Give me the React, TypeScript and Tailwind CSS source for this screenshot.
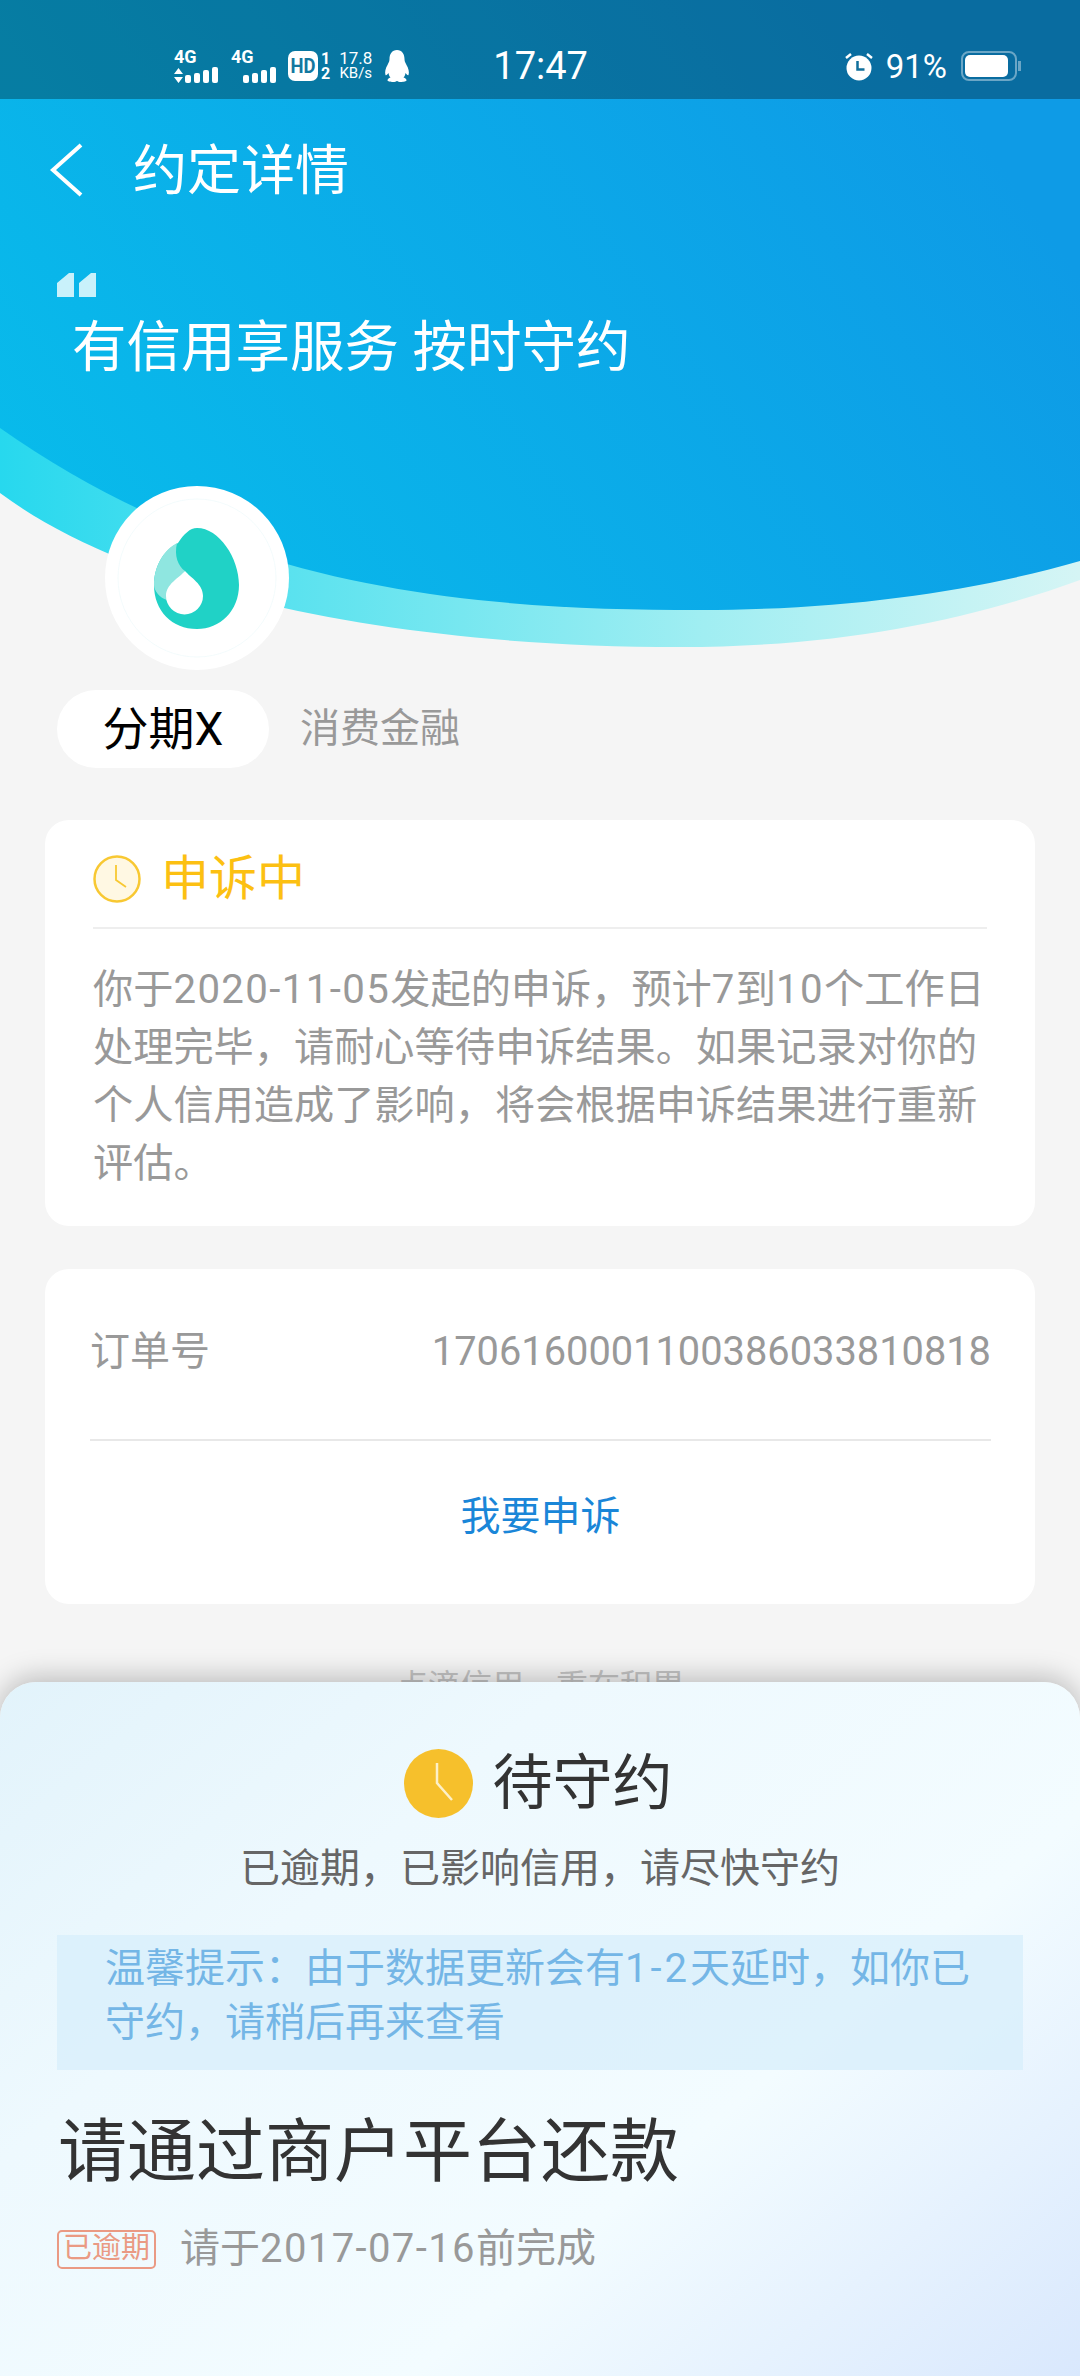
const cjk = "font-['Roboto','Noto_Sans_CJK_SC',sans-serif]";

function Num({ children }: { children: string }) {
  return <span className="tracking-[1.4px]">{children}</span>;
}

function Signal({ arrows }: { arrows?: boolean }) {
  return (
    <div className="mr-[10px] flex w-[47px] flex-col">
      <span className="font-['Roboto',sans-serif] text-[18px] leading-[13px] font-bold">4G</span>
      <div className="mt-[3px] flex h-[17px] items-end gap-[3px]">
        {arrows ? (
          <svg width="9" height="15" viewBox="0 0 9 15" fill="#fff" className="mr-[-1px]">
            <path d="M4.500 0L9 6H0zM0 9h9l-4.500 6z" />
          </svg>
        ) : (
          <div className="w-[9px]" />
        )}
        <div className="h-[8px] w-[6px] rounded-[2px] bg-white" />
        <div className="h-[10px] w-[6px] rounded-[2px] bg-white" />
        <div className="h-[13px] w-[6px] rounded-[2px] bg-white" />
        <div className="h-[16px] w-[6px] rounded-[2px] bg-white" />
      </div>
    </div>
  );
}

function StatusBar() {
  return (
    <div className="relative z-10 flex h-[99px] items-center bg-black/30 pt-[33px] text-white">
      <div className="ml-[174px] flex items-center">
        <Signal arrows />
        <Signal />
        <svg width="30" height="30" viewBox="0 0 30 30">
          <rect width="30" height="30" rx="7" fill="#fff" />
          <text x="15" y="22" textAnchor="middle" fontSize="20" fontWeight="700" fontFamily="Roboto" fill="#14789f" textLength="25" lengthAdjust="spacingAndGlyphs">HD</text>
        </svg>
        <div className="ml-[3px] flex flex-col text-[16px] leading-[15px] font-bold">
          <span className="text-center">1</span>
          <span>2</span>
        </div>
        <div className="ml-[9px] flex flex-col items-center text-[15px] leading-[15px]">
          <span className="text-[17px]">17.8</span>
          <span>KB/s</span>
        </div>
        <svg width="26" height="32" viewBox="0 0 26 32" className="ml-[12px]" fill="#fff">
          <path d="M13 0c5 0 7.500 4 7.500 9 0 2 .5 3 2 6 2 3.500 3 7 2 10-.5 1-2-.5-3-2-.3 2-1 3.500-2 4.500 2 .8 3 1.500 3 2.800 0 1.200-3 1.700-5.500 1.700-2 0-3.200-.5-4-1-.8.5-2 1-4 1-2.500 0-5.500-.5-5.500-1.700 0-1.300 1-2 3-2.800-1-1-1.700-2.500-2-4.500-1 1.500-2.500 3-3 2-1-3 0-6.500 2-10 1.500-3 2-4 2-6 0-5 2.500-9 7.500-9z" />
        </svg>
      </div>
      <div className="ml-[83px] font-['Roboto',sans-serif] text-[38px] leading-none">17:47</div>
      <div className="mr-[59px] ml-auto flex items-center">
        <svg width="30" height="30" viewBox="0 0 30 30">
          <circle cx="15" cy="17" r="12.500" fill="#fff" />
          <path d="M13.500 10v8.500h7" fill="none" stroke="#106f9c" strokeWidth="2.500" />
          <path d="M2 7l5-4M28 7l-5-4" stroke="#fff" strokeWidth="2.500" />
        </svg>
        <span className="ml-[12px] font-['Roboto',sans-serif] text-[33px] leading-none">91%</span>
        <div className="ml-[14px] flex items-center">
          <div className="flex h-[30px] w-[56px] items-center rounded-[8px] border-2 border-white/40 p-[2px]">
            <div className="h-full w-[43px] rounded-[5px] bg-white" />
          </div>
          <div className="ml-[1px] h-[10px] w-[3px] bg-white/40" />
        </div>
      </div>
    </div>
  );
}

function Wave() {
  return (
    <svg width="1080" height="660" viewBox="0 0 1080 660" className="absolute top-0 left-0">
      <defs>
        <linearGradient id="sky" x1="0" y1="0.85" x2="1" y2="0.45">
          <stop offset="0" stopColor="#08bceb" />
          <stop offset="1" stopColor="#0e9be6" />
        </linearGradient>
        <linearGradient id="band" x1="0" y1="0" x2="1" y2="0">
          <stop offset="0" stopColor="#27d8ee" />
          <stop offset="0.3" stopColor="#60e3ef" />
          <stop offset="0.65" stopColor="#a0eef2" />
          <stop offset="1" stopColor="#d5f5f5" />
        </linearGradient>
      </defs>
      <path d="M0 493C130 590 380 647 680 647C840 647 970 620 1080 580V400H0Z" fill="url(#band)" />
      <path d="M0 428C230 590 470 610 700 610C850 610 980 590 1080 561V0H0Z" fill="url(#sky)" />
    </svg>
  );
}

function Logo() {
  return (
    <div className="h-[184px] w-[184px] rounded-full bg-white">
      <svg width="184" height="184" viewBox="0 0 184 184">
        <circle cx="92" cy="92" r="79" fill="none" stroke="#eef9fb" strokeWidth="0.7" />
        <g transform="translate(49 42)">
          <path d="M43 0C65 0 85 30 85 57C85 83 66 101 43 101C18 101 0 83 0 57C0 38 10 22 24 15C30 6 36 0 43 0Z" fill="#20d2c6" />
          <path d="M23 15C10 22 0 38 0 57C0 63 6 70 13 72L31 43C24 38 20 28 23 15Z" fill="#8fe6e0" />
          <path d="M31 43C37 50 49 56 49 68A18.500 18.500 0 0 1 12 68C12 56 25 50 31 43Z" fill="#fff" />
        </g>
      </svg>
    </div>
  );
}

function ClockOutline() {
  return (
    <svg width="48" height="48" viewBox="0 0 48 48" fill="none" stroke="#f8c832">
      <circle cx="24" cy="24" r="22.500" fill="#fff8e3" strokeWidth="2.500" />
      <path d="M23 10v15l10 7" strokeWidth="1.800" />
    </svg>
  );
}

export default function App() {
  return (
    <div className={`relative h-[2376px] w-[1080px] overflow-hidden bg-[#f5f5f5] ${cjk}`}>
      <Wave />
      <StatusBar />

      <div className="relative">
        <div className="flex h-[142px] items-center pl-[48px]">
          <svg width="36" height="54" viewBox="0 0 36 54" fill="none" stroke="#fff" strokeWidth="4">
            <path d="M33 2L5 27l28 25" />
          </svg>
          <div className="mt-[4px] ml-[49px] text-[54px] leading-none text-white">约定详情</div>
        </div>

        <div className="mt-[32px] pl-[57px]">
          <svg width="40" height="24" viewBox="0 0 40 24" fill="#c9f1fb" className="block">
            <path d="M0 24V10L12 0 17 0V24ZM22 24V10L34 0 39 0V24Z" />
          </svg>
        </div>
        <div className="mt-[18px] pl-[72px] text-[54.500px] leading-[64px] text-white">有信用享服务 按时守约</div>

        <div className="mt-[107px] ml-[105px]">
          <Logo />
        </div>

        <div className="mt-[20px] flex items-center pl-[57px]">
          <div className="flex h-[78px] w-[212px] items-center justify-center rounded-[39px] bg-white text-[46px] text-black">
            分期X
          </div>
          <div className="ml-[31px] text-[40px] text-[#999]">消费金融</div>
        </div>

        <div className="mx-[45px] mt-[52px] rounded-[24px] bg-white px-[48px]">
          <div className="flex h-[109px] items-center border-b-2 border-[#eeeeee] pt-[10px]">
            <ClockOutline />
            <span className="ml-[20px] text-[48px] text-[#fcc012]">申诉中</span>
          </div>
          <div className="pt-[32px] pb-[33px] text-[40.200px] leading-[58px] whitespace-nowrap text-[#999]">
            <div>
              你于<Num>2020-11-05</Num>发起的申诉，预计<Num>7</Num>到<Num>10</Num>个工作日
            </div>
            <div>处理完毕，请耐心等待申诉结果。如果记录对你的</div>
            <div>个人信用造成了影响，将会根据申诉结果进行重新</div>
            <div>评估。</div>
          </div>
        </div>

        <div className="mx-[45px] mt-[43px] rounded-[24px] bg-white pr-[44px] pl-[45px]">
          <div className="flex h-[172px] items-center justify-between border-b-2 border-[#e8e8e8] pb-[4px] text-[40px] text-[#999]">
            <span>订单号</span>
            <span className="text-[39.800px]">1706160001100386033810818</span>
          </div>
          <div className="flex h-[163px] items-center justify-center pb-[12px] text-[40px] text-[#1a86d8]">我要申诉</div>
        </div>

        <div className="mt-[62px] text-center text-[32px] leading-[40px] text-[#c4c4c4]">点滴信用，重在积累</div>
      </div>

      <div className="absolute inset-x-0 bottom-0 h-[694px] rounded-t-[36px] bg-[linear-gradient(140deg,#e2f3fb_0%,#eef9fe_30%,#f3fcff_65%,#d9e8fd_100%)] pt-[67px] shadow-[0_-4px_28px_rgba(0,0,0,0.25)]">
        <div className="flex items-center justify-center pr-[4px]">
          <svg width="69" height="69" viewBox="0 0 69 69">
            <circle cx="34.500" cy="34.500" r="34.500" fill="#f6c02c" />
            <path d="M33 14v20l15 17" fill="none" stroke="#fdf0c8" strokeWidth="2.500" />
          </svg>
          <span className="ml-[20px] text-[60px] leading-none text-[#333]">待守约</span>
        </div>
        <div className="mt-[26px] text-center text-[40px] leading-[50px] text-[#666]">已逾期，已影响信用，请尽快守约</div>
        <div className="mx-[57px] mt-[41px] h-[135px] bg-[#d8effb]/80 px-[48px] py-[7px] text-[40px] leading-[54px] whitespace-nowrap text-[#74b6e6]">
          <div>
            温馨提示：由于数据更新会有<span className="tracking-[3px]">1-2</span>天延时，如你已
          </div>
          <div>守约，请稍后再来查看</div>
        </div>
        <div className="mt-[43px] pl-[58px] text-[69px] leading-[80px] text-[#333]">请通过商户平台还款</div>
        <div className="mt-[36px] flex items-center pl-[57px]">
          <div className="flex h-[39px] w-[99px] items-center justify-center rounded-[5px] border-2 border-[#ea9a84] text-[29px] text-[#ea9a84]">
            已逾期
          </div>
          <div className="ml-[24px] text-[40px] leading-none text-[#999]">
            请于<Num>2017-07-16</Num>前完成
          </div>
        </div>
      </div>
    </div>
  );
}
